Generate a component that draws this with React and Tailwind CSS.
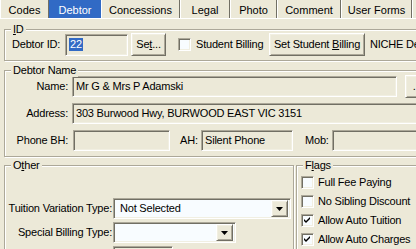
import React from "react"

const sunken =
  "border border-t-[#ACA899] border-l-[#ACA899] border-b-white border-r-white shadow-[inset_1px_1px_0_#716F64,inset_-1px_-1px_0_#F1EFE2]"
const raised =
  "border border-t-white border-l-white border-b-[#716F64] border-r-[#716F64] shadow-[inset_1px_1px_0_#F1EFE2,inset_-1px_-1px_0_#ACA899] bg-[#ECE9D8]"

const tabs = [
  { label: "Codes", w: "w-[49px]" },
  { label: "Debtor", w: "w-[52px]", active: true },
  { label: "Concessions", w: "w-[79px]" },
  { label: "Legal", w: "w-[50px]" },
  { label: "Photo", w: "w-[47px]" },
  { label: "Comment", w: "w-[64px]" },
  { label: "User Forms", w: "w-[71px]" },
  { label: "", w: "w-[20px]" },
]

function GroupBox({ title, className, children }) {
  return (
    <div
      className={`relative border border-[#ACA899] shadow-[inset_1px_1px_0_#fff,1px_1px_0_#fff] ${className}`}
    >
      <div className="absolute left-[6px] top-[-7px] bg-[#ECE9D8] px-[2px] leading-[13px] whitespace-nowrap">
        {title}
      </div>
      {children}
    </div>
  )
}

function CheckBox({ checked, className = "" }) {
  return (
    <div className={`w-[13px] h-[13px] shrink-0 bg-[#F8FCFF] flex items-center justify-center ${sunken} ${className}`}>
      {checked && (
        <svg width="7" height="7" viewBox="0 0 7 7">
          <path d="M0 2 L2 4 L6 0 L6 2 L2 6 L0 4 Z" fill="#000" />
        </svg>
      )}
    </div>
  )
}

function Combo({ value, className }) {
  return (
    <div className={`h-[21px] shrink-0 bg-[#F8FCFF] flex items-center p-[2px] ${sunken} ${className}`}>
      <span className="flex-1 pl-[4px] whitespace-nowrap overflow-hidden">{value}</span>
      <div className={`w-[17px] h-[17px] shrink-0 flex items-center justify-center ${raised}`}>
        <svg width="7" height="4" viewBox="0 0 7 4">
          <path d="M0 0 H7 L3.5 4 Z" fill="#000" />
        </svg>
      </div>
    </div>
  )
}

export default function App() {
  return (
    <div className="w-[416px] h-[249px] overflow-hidden bg-[#ECE9D8] text-[11px] leading-[13px] tracking-[-0.2px] text-black whitespace-nowrap font-['Liberation_Sans',Arial,sans-serif]">
      {/* Tabs */}
      <div className="flex h-[18px]">
        {tabs.map((t) => (
          <div
            key={t.label + t.w}
            className={`${t.w} shrink-0 h-full flex items-center justify-center pt-[2px] tracking-normal ${
              t.active
                ? "bg-[#316AC5] text-white"
                : "bg-[#ECE9D8] border-l border-white border-r border-r-[#716F64]"
            }`}
          >
            {t.label}
          </div>
        ))}
      </div>

      <div className="border-t border-white pl-[4px]">
        {/* ID */}
        <GroupBox title={<><u>I</u>D</>} className="w-[440px] mt-[10px]">
          <div className="flex items-center h-[23px] mt-[3px] mb-[4px] ml-[7px]">
            <span className="w-[53px] shrink-0">Debtor ID:</span>
            <div className={`w-[63px] h-[22px] shrink-0 bg-[#ECE9D8] flex items-center pl-[3px] ${sunken}`}>
              <span className="bg-[#316AC5] text-white px-[1px]">22</span>
            </div>
            <button className={`ml-[3px] w-[35px] h-[23px] shrink-0 ${raised}`}>
              Se<u>t</u>...
            </button>
            <CheckBox className="ml-[12px]" />
            <span className="ml-[5px] w-[73px] shrink-0">Student Billing</span>
            <button className={`w-[96px] h-[23px] shrink-0 ${raised}`}>
              Set Student <u>B</u>illing
            </button>
            <span className="ml-[5px]">NICHE Debtor</span>
          </div>
        </GroupBox>

        {/* Debtor Name */}
        <GroupBox title="Debtor Name" className="w-[440px] mt-[9px] pt-[4px] pb-[4px]">
          <div className="flex items-center h-[23px]">
            <span className="w-[63px] shrink-0 text-right">Name:</span>
            <div className={`ml-[4px] w-[325px] h-[21px] shrink-0 flex items-center pl-[3px] ${sunken}`}>
              Mr G &amp; Mrs P Adamski
            </div>
            <button className={`ml-[8px] w-[24px] h-[23px] shrink-0 ${raised}`}>...</button>
          </div>
          <div className="flex items-center h-[23px] mt-[4px]">
            <span className="w-[63px] shrink-0 text-right">Address:</span>
            <div className={`ml-[4px] w-[360px] h-[21px] shrink-0 flex items-center pl-[3px] ${sunken}`}>
              303 Burwood Hwy, BURWOOD EAST VIC 3151
            </div>
          </div>
          <div className="flex items-center h-[23px] mt-[4px]">
            <span className="w-[63px] shrink-0 text-right">Phone BH:</span>
            <div className={`ml-[5px] w-[97px] h-[21px] shrink-0 ${sunken}`} />
            <span className="ml-[10px] w-[21px] shrink-0">AH:</span>
            <div className={`w-[92px] h-[21px] shrink-0 flex items-center pl-[3px] ${sunken}`}>Silent Phone</div>
            <span className="ml-[12px] w-[27px] shrink-0">Mob:</span>
            <div className={`w-[100px] h-[21px] shrink-0 ${sunken}`} />
          </div>
        </GroupBox>

        <div className="flex mt-[8px]">
          {/* Other */}
          <GroupBox title={<>O<u>t</u>her</>} className="w-[290px] h-[100px] shrink-0">
            <div className="flex items-center h-[23px] mt-[31px]">
              <span className="w-[108px] shrink-0 text-right pr-[1px]">Tuition Variation Type:</span>
              <Combo value="Not Selected" className="w-[178px]" />
            </div>
            <div className="flex items-center h-[23px] mt-[1px]">
              <span className="w-[108px] shrink-0 text-right pr-[1px]">Special Billing Type:</span>
              <Combo value="" className="w-[123px]" />
            </div>
            <div className="flex items-center h-[23px] mt-[1px]">
              <span className="w-[108px] shrink-0" />
              <div className={`w-[60px] h-[21px] shrink-0 ${sunken}`} />
            </div>
          </GroupBox>

          {/* Flags */}
          <GroupBox title={<>F<u>l</u>ags</>} className="ml-[2px] w-[140px] h-[100px] shrink-0">
            <div className="flex flex-col pl-[4px] pt-[10px]">
              {[
                ["Full Fee Paying", false],
                ["No Sibling Discount", false],
                ["Allow Auto Tuition", true],
                ["Allow Auto Charges", true],
              ].map(([label, checked]) => (
                <div key={label} className="flex items-center h-[13px] mb-[6px]">
                  <CheckBox checked={checked} />
                  <span className="ml-[4px]">{label}</span>
                </div>
              ))}
            </div>
          </GroupBox>
        </div>
      </div>
    </div>
  )
}
